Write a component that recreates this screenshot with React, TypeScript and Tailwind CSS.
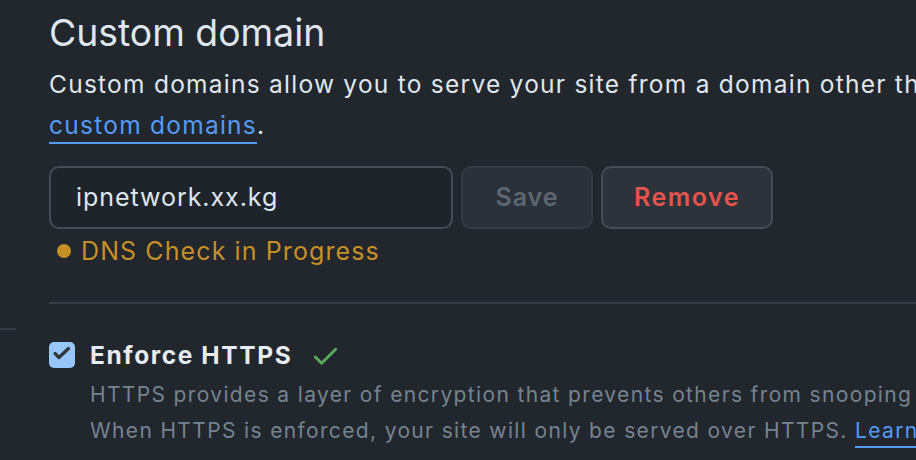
import React from "react";

const CHECK =
  "M13.78 4.22a.75.75 0 0 1 0 1.06l-7.25 7.25a.75.75 0 0 1-1.06 0L2.22 9.28a.751.751 0 0 1 .018-1.042.751.751 0 0 1 1.042-.018L6 10.94l6.72-6.72a.75.75 0 0 1 1.06 0Z";

export default function App() {
  return (
    <div
      className="w-[916px] h-[460px] overflow-hidden bg-[#22272e] flex"
      style={{ fontFamily: "Inter, 'Noto Sans', sans-serif" }}
    >
      <div className="w-[16px] shrink-0">
        <div className="mt-[328px] border-t-2 border-[#373e47]" />
      </div>
      <div className="pl-[33px] flex-1 min-w-0">
        <h2 className="pt-[10px] text-[37.3px] leading-[46px] font-normal text-[#dfe6ee] whitespace-nowrap">
          Custom domain
        </h2>
        <p className="mt-[8px] text-[24.5px] leading-[41px] tracking-[1.25px] text-[#dfe6ee] whitespace-nowrap">
          Custom domains allow you to serve your site from a domain other than
          <br />
          <a className="text-[#539bf5] underline underline-offset-[8px] decoration-2">custom domains</a>.
        </p>
        <div className="mt-[20px] flex gap-[8px]">
          <div className="w-[404px] h-[63px] rounded-[10px] border-2 border-[#444c56] bg-[#1f242b] flex items-center pl-[25px] text-[25px] tracking-[0.95px] text-[#dfe6ee]">
            ipnetwork.xx.kg
          </div>
          <button className="w-[132px] h-[63px] rounded-[10px] border-2 border-[#373e47]/70 bg-[#2b313a] text-[25px] font-semibold tracking-[1px] text-[#5d6670]">
            Save
          </button>
          <button className="w-[172px] h-[63px] rounded-[10px] border-2 border-[#444c56] bg-[#2d333b] text-[25px] font-semibold tracking-[1.5px] text-[#e5534b]">
            Remove
          </button>
        </div>
        <div className="mt-[7px] flex items-center h-[30px] text-[25px] leading-[30px] tracking-[1.1px] text-[#c69026] whitespace-nowrap">
          <span className="ml-[8px] w-[14px] h-[14px] rounded-full bg-[#c69026] mr-[10px]" />
          DNS Check in Progress
        </div>
        <div className="mt-[36px] border-t-2 border-[#373e47]" />
        <div className="mt-[37px] flex">
          <div className="w-[26px] h-[26px] rounded-[5px] bg-[#96c6fa] shrink-0 mt-[1px]">
            <svg width="26" height="26" viewBox="0 0 26 26">
              <polyline
                points="6,11.5 10,15.5 19.5,6.5"
                fill="none"
                stroke="#30363e"
                strokeWidth="3.2"
                strokeLinecap="round"
                strokeLinejoin="round"
              />
            </svg>
          </div>
          <div className="ml-[15px] min-w-0">
            <div className="flex items-center h-[28px]">
              <span className="text-[24.5px] leading-[28px] font-bold tracking-[1.6px] text-[#e6ecf2] whitespace-nowrap">
                Enforce HTTPS
              </span>
              <svg className="ml-[18px]" width="31" height="31" viewBox="0 0 16 16" fill="#57ab5a">
                <path d={CHECK} />
              </svg>
            </div>
            <p className="mt-[8px] text-[21px] leading-[36px] tracking-[1.35px] text-[#768390] whitespace-nowrap">
              HTTPS provides a layer of encryption that prevents others from snooping
              <br />
              When HTTPS is enforced, your site will only be served over HTTPS.{" "}
              <a className="text-[#539bf5] underline underline-offset-[8px] decoration-2">Learn</a>
            </p>
          </div>
        </div>
      </div>
    </div>
  );
}
